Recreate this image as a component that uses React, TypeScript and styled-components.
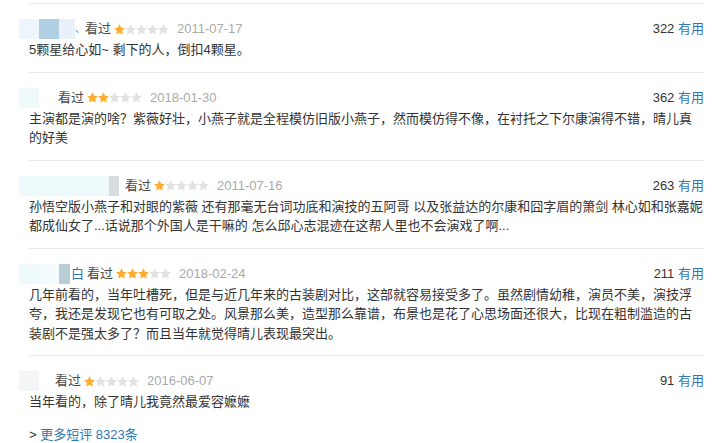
import React from "react";
import styled, { createGlobalStyle } from "styled-components";

const GlobalStyle = createGlobalStyle`
    html, body {
        margin: 0;
        padding: 0;
        background: #fff;
    }
    body {
        font-family: "Liberation Sans", "Noto Sans CJK SC", sans-serif;
        font-size: 13px;
        color: #333;
    }
`;

type Blot = { w: number; c: string };

type Review = {
    name: Blot[];
    tail?: string;
    gap: number;
    rating: number;
    date: string;
    votes: number;
    text: string;
};

const reviews: Review[] = [
    {
        name: [
            { w: 20, c: "#eef6fc" },
            { w: 20, c: "#b1cfe3" },
            { w: 16, c: "#e8f1f9" },
        ],
        tail: "、",
        gap: 0,
        rating: 1,
        date: "2011-07-17",
        votes: 322,
        text: "5颗星给心如~ 剩下的人，倒扣4颗星。",
    },
    {
        name: [{ w: 20, c: "#f0f9fc" }],
        gap: 19,
        rating: 2,
        date: "2018-01-30",
        votes: 362,
        text: "主演都是演的啥？紫薇好壮，小燕子就是全程模仿旧版小燕子，然而模仿得不像，在衬托之下尔康演得不错，晴儿真的好美",
    },
    {
        name: [
            { w: 90, c: "#eef9fc" },
            { w: 10, c: "#d6dcdf" },
        ],
        gap: 6,
        rating: 1,
        date: "2011-07-16",
        votes: 263,
        text: "孙悟空版小燕子和对眼的紫薇 还有那毫无台词功底和演技的五阿哥 以及张益达的尔康和囧字眉的箫剑 林心如和张嘉妮都成仙女了...话说那个外国人是干嘛的 怎么邱心志混迹在这帮人里也不会演戏了啊...",
    },
    {
        name: [
            { w: 20, c: "#eef9fc" },
            { w: 20, c: "#f3fbfd" },
            { w: 11, c: "#b9cdd7" },
        ],
        tail: "白",
        gap: 3,
        rating: 3,
        date: "2018-02-24",
        votes: 211,
        text: "几年前看的，当年吐槽死，但是与近几年来的古装剧对比，这部就容易接受多了。虽然剧情幼稚，演员不美，演技浮夸，我还是发现它也有可取之处。风景那么美，造型那么靠谱，布景也是花了心思场面还很大，比现在粗制滥造的古装剧不是强太多了？而且当年就觉得晴儿表现最突出。",
    },
    {
        name: [{ w: 20, c: "#f3f5f7" }],
        gap: 16,
        rating: 1,
        date: "2016-06-07",
        votes: 91,
        text: "当年看的，除了晴儿我竟然最爱容嬷嬷",
    },
];

const Star = ({ on }: { on: boolean }) => (
    <svg width="11" height="11" viewBox="0 0 24 24">
        <path
            d="M12 .6l3.6 7.4 8.1 1.1-5.9 5.7 1.5 8L12 19l-7.3 3.8 1.5-8L.3 9.1l8.1-1.1z"
            fill={on ? "#ffac2d" : "#e2e2e2"}
        />
    </svg>
);

export default function App() {
    return (
        <>
            <GlobalStyle />
            <Wrapper>
                {reviews.map((r, i) => (
                    <Item key={i}>
                        <Header>
                            <Meta>
                                <Name $gap={r.gap}>
                                    {r.name.map((b, j) => (
                                        <NameBlot key={j} $w={b.w} $c={b.c} />
                                    ))}
                                    {r.tail && (
                                        <NameTail $small={r.tail === "、"}>
                                            {r.tail}
                                        </NameTail>
                                    )}
                                </Name>
                                <Watched>看过</Watched>
                                <Stars>
                                    {[0, 1, 2, 3, 4].map((s) => (
                                        <Star key={s} on={s < r.rating} />
                                    ))}
                                </Stars>
                                <DateText>{r.date}</DateText>
                            </Meta>
                            <Votes>
                                {r.votes} <Useful>有用</Useful>
                            </Votes>
                        </Header>
                        <Content>{r.text}</Content>
                    </Item>
                ))}
                <More>
                    &gt; <MoreLink>更多短评 8323条</MoreLink>
                </More>
            </Wrapper>
        </>
    );
}

const Wrapper = styled.div`
    padding: 3px 14px 0 29px;
`;

const Item = styled.div`
    border-top: 1px solid #eaeaea;
    padding: 15px 0 12px;
`;

const Header = styled.div`
    display: flex;
    align-items: center;
    justify-content: space-between;
    height: 20px;
    line-height: 20px;
`;

const Meta = styled.div`
    display: flex;
    align-items: center;
`;

const Name = styled.span<{ $gap: number }>`
    display: flex;
    align-items: center;
    margin-left: -10px;
    margin-right: ${(p) => p.$gap}px;
`;

const NameBlot = styled.span<{ $w: number; $c: string }>`
    display: inline-block;
    width: ${(p) => p.$w}px;
    height: 20px;
    background: ${(p) => p.$c};
`;

const NameTail = styled.span<{ $small: boolean }>`
    color: #37a;
    font-size: ${(p) => (p.$small ? 10 : 13)}px;
    line-height: 20px;
    margin-left: ${(p) => (p.$small ? 0 : 1)}px;
`;

const Watched = styled.span`
    color: #494949;
    margin-right: 3px;
`;

const Stars = styled.span`
    display: flex;
    align-items: center;
    margin-right: 8px;
`;

const DateText = styled.span`
    color: #aaa;
`;

const Votes = styled.span`
    color: #333;
`;

const Useful = styled.span`
    color: #37a;
`;

const Content = styled.p`
    margin: 1px 0 0;
    line-height: 19.5px;
    color: #333;
`;

const More = styled.div`
    margin-top: 1px;
    line-height: 20px;
    color: #333;
`;

const MoreLink = styled.span`
    color: #37a;
`;
